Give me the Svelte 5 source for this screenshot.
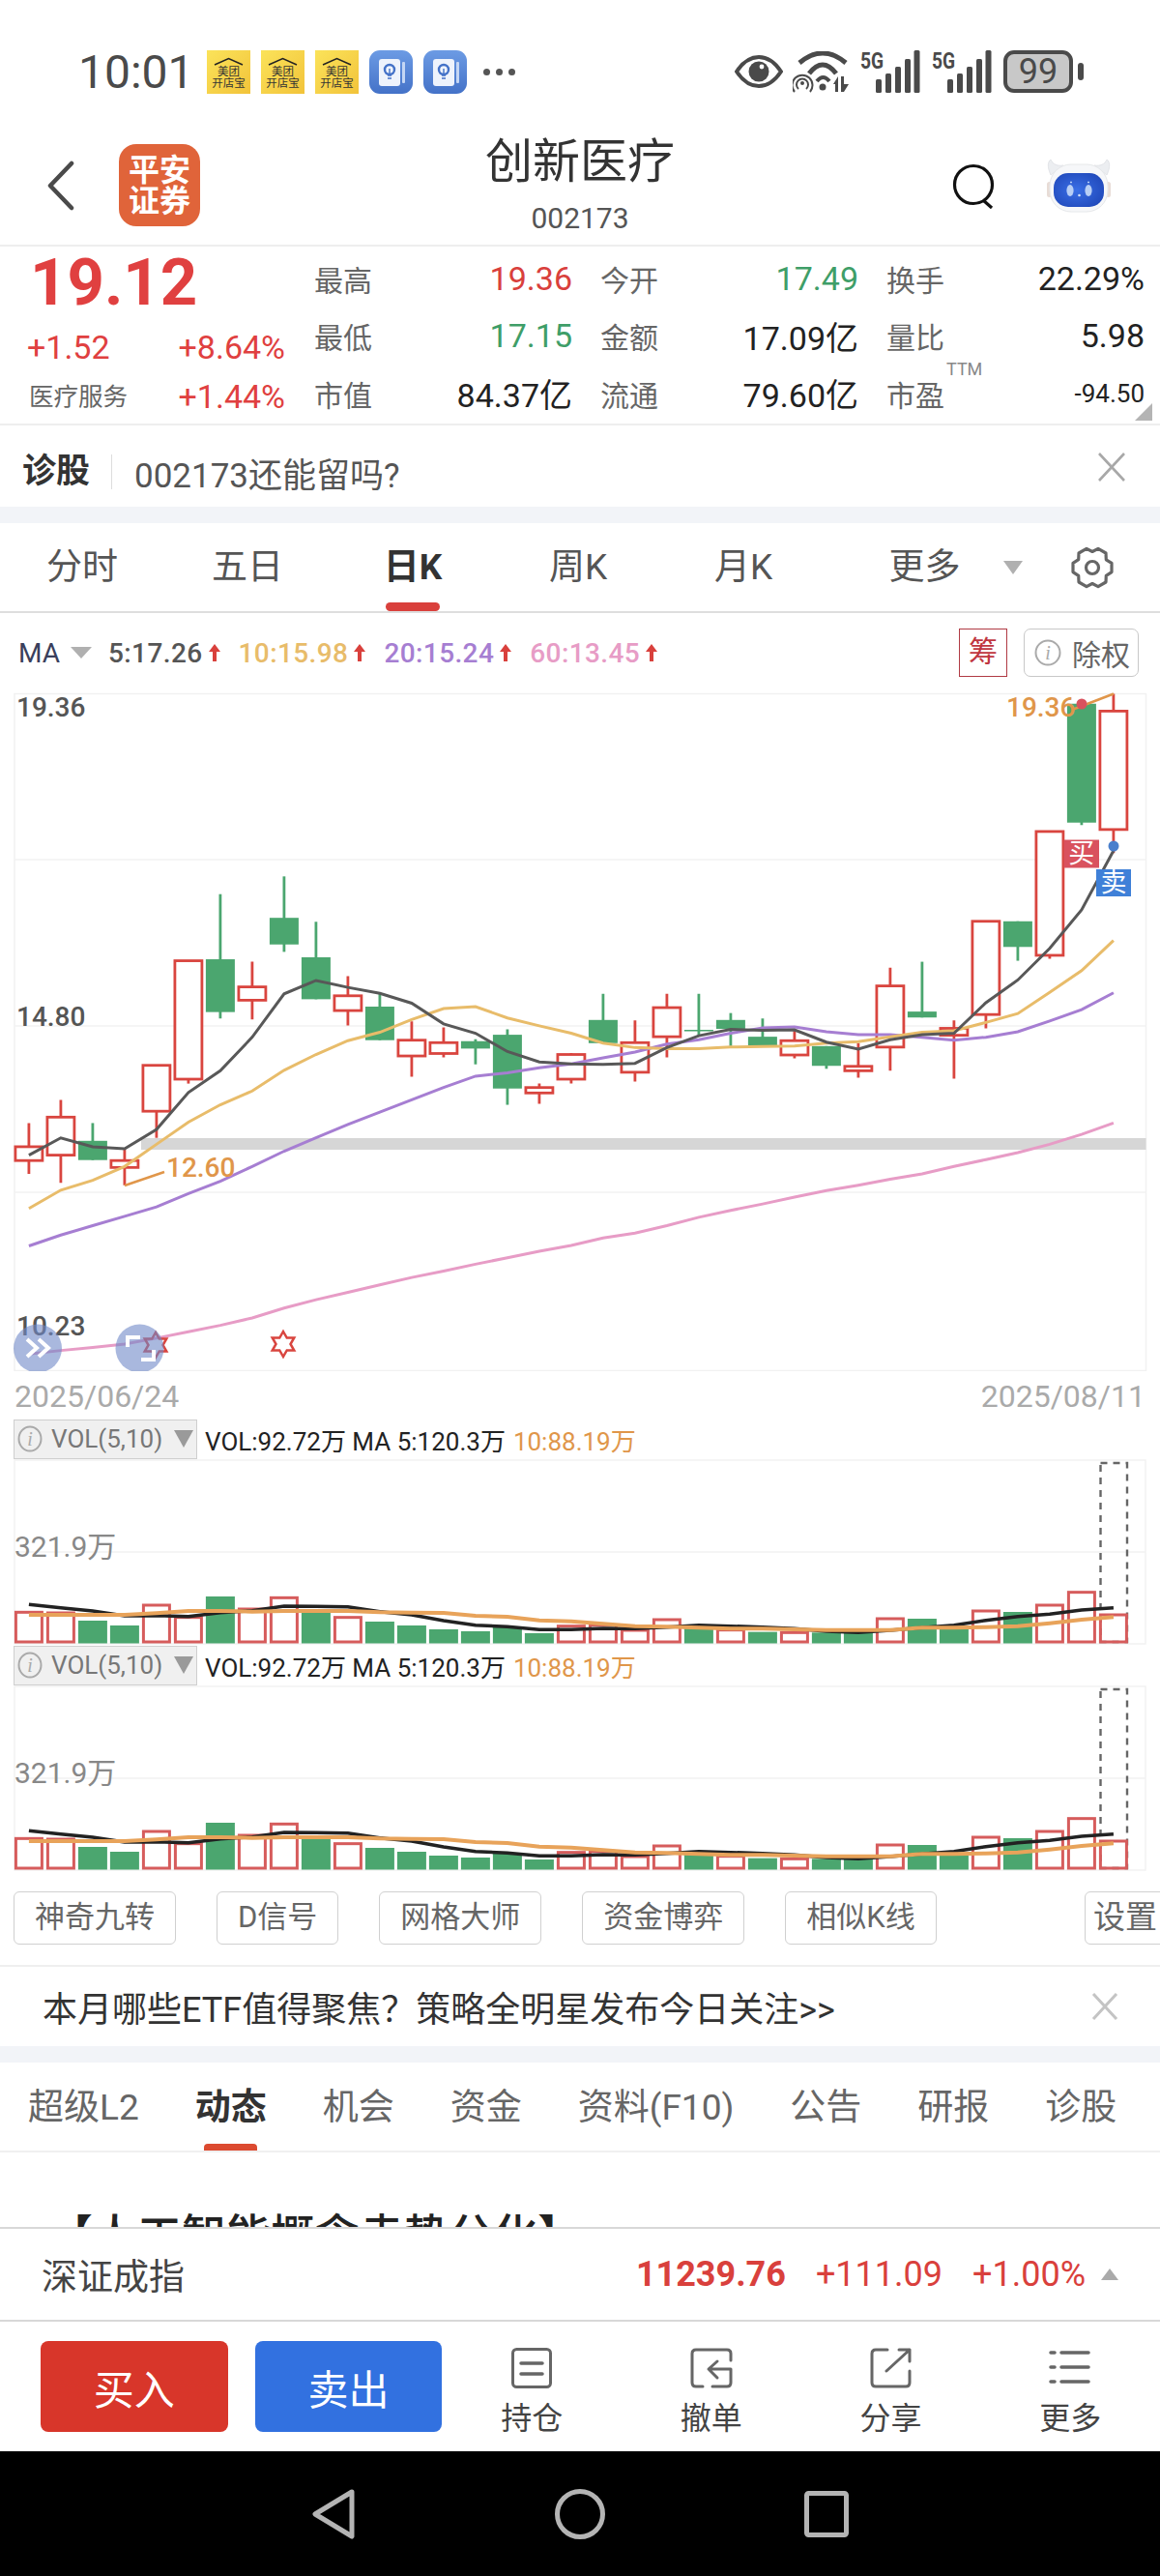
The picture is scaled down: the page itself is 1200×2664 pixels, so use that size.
<script>
  // candles traced off the chart: hi, top, bottom, lo (chart space, see py), r = up / g = down
  const candles = [
    ['r',1022,1070,1098,1125],['r',975,1010,1087,1143],['g',1022,1058,1097,1097],['r',1075,1098,1112,1148],
    ['r',905,905,998,1052],['r',693,693,933,942],['g',558,690,797,810],['r',695,746,773,812],
    ['g',522,606,660,675],['g',614,686,771,771],['r',724,764,794,824],['g',760,786,854,854],
    ['r',816,854,886,928],['r',828,859,881,889],['g',852,856,871,903],['g',832,843,952,985],
    ['r',942,950,961,983],['r',880,883,933,942],['g',760,813,860,860],['r',814,859,919,938],
    ['r',760,788,847,889],['g',760,833,836,845],['g',799,813,831,866],['g',810,847,866,866],
    ['r',835,855,884,891],['g',866,866,906,912],['r',860,907,916,930],['r',707,744,868,916],
    ['g',695,796,808,808],['r',814,830,844,932],['r',612,613,802,830],['g',613,613,665,693],
    ['r',430,431,682,689],['g',172,172,413,418],['r',152,187,427,475]
  ];
  const ma5 = [1087,1052,1070,1074,1035,960,916,848,760,733,747,759,779,821,840,877,898,902,903,901,869,845,832,834,833,858,872,853,843,840,778,732,668,590,470];
  const ma10 = [1195,1158,1138,1110,1065,1020,985,957,915,883,855,838,812,790,786,809,825,840,860,869,871,871,868,867,866,860,857,847,838,835,818,800,757,713,652];
  const ma20 = [1271,1249,1230,1211,1192,1165,1140,1110,1079,1052,1025,1000,975,950,927,920,910,902,890,878,862,853,840,829,827,837,843,843,848,854,848,837,815,792,758];
  const ma60 = [1490,1483,1477,1470,1458,1445,1432,1417,1397,1380,1365,1350,1335,1322,1308,1295,1282,1270,1255,1245,1230,1213,1199,1186,1172,1159,1148,1136,1125,1110,1096,1082,1065,1045,1022];

  const px = (i) => 29.9 + i * 33;
  const py = (z) => 640 + z / 1.96;
  const line = (arr) => arr.map((z, i) => `${px(i)},${py(z)}`).join(' ');

  const volBars = [
    ['r',682],['r',684],['g',708],['g',723],['r',660],['r',698],['g',633],['r',672],['r',637],['g',672],
    ['r',698],['g',711],['g',723],['g',735],['g',741],['g',727],['g',747],['r',725],['r',722],['r',738],
    ['r',705],['g',725],['r',737],['g',743],['r',745],['g',745],['g',740],['r',702],['g',702],['g',725],
    ['r',678],['g',681],['r',660],['r',620],['r',690]
  ];
  const volMa5 = [658,668,678,693,692,695,683,677,663,664,665,680,690,708,722,727,736,736,732,733,728,722,725,728,733,741,745,738,730,722,707,695,688,675,668];
  const volMa10 = [690,690,690,690,685,678,678,680,678,678,678,682,683,684,693,696,707,710,718,725,727,730,733,733,735,737,737,737,730,730,728,725,716,705,697];
  const vy = (z) => 1440 + z / 3;
  const vline = (arr) => arr.map((z, i) => `${px(i)},${vy(z)}`).join(' ');

  const star = '0,-13 3.75,-6.5 11.26,-6.5 7.5,0 11.26,6.5 3.75,6.5 0,13 -3.75,6.5 -11.26,6.5 -7.5,0 -11.26,-6.5 -3.75,-6.5';

  // six lobed settings gear, lobes on the sides, valleys top and bottom
  function gearPoints() {
    const pts = [];
    const at = (deg, r) => {
      const a = (deg * Math.PI) / 180;
      pts.push(`${(22 + r * Math.cos(a)).toFixed(1)},${(22 + r * Math.sin(a)).toFixed(1)}`);
    };
    for (let k = 0; k < 6; k++) {
      const a = k * 60;
      at(a - 30, 16.5);
      at(a - 13, 20.5);
      at(a + 13, 20.5);
    }
    return pts.join(' ');
  }

  const quote = [
    ['最高', '19.36', 'up'], ['今开', '17.49', 'down'], ['换手', '22.29%', ''],
    ['最低', '17.15', 'down'], ['金额', '17.09亿', ''], ['量比', '5.98', ''],
    ['市值', '84.37亿', ''], ['流通', '79.60亿', ''], ['市盈', '-94.50', 'small']
  ];
  const periods = ['分时', '五日', '日K', '周K', '月K'];
  const maItems = [
    ['5:17.26', 'c5'], ['10:15.98', 'c10'], ['20:15.24', 'c20'], ['60:13.45', 'c60']
  ];
  const tools = ['神奇九转', 'D信号', '网格大师', '资金博弈', '相似K线'];
  const infoTabs = ['超级L2', '动态', '机会', '资金', '资料(F10)', '公告', '研报', '诊股'];
</script>

<div class="page">
  <div class="status">
    <span class="time">10:01</span>
    {#each [0, 1, 2] as _}
      <svg class="note" viewBox="0 0 45 45">
        <defs>
          <linearGradient id="mt" x1="0" y1="0" x2="1" y2="1">
            <stop offset="0" stop-color="#fbe35a" /><stop offset="1" stop-color="#f2c33a" />
          </linearGradient>
        </defs>
        <rect width="45" height="45" fill="url(#mt)" />
        <path d="M8 15 L22.5 8.5 L37 15" fill="none" stroke="#222" stroke-width="1.5" />
        <text x="22.5" y="26" class="mt-txt">美团</text>
        <text x="22.5" y="38" class="mt-txt">开店宝</text>
      </svg>
    {/each}
    {#each [0, 1] as _}
      <svg class="note" viewBox="0 0 45 45">
        <defs>
          <linearGradient id="bl" x1="0" y1="0" x2="0" y2="1">
            <stop offset="0" stop-color="#6c9be4" /><stop offset="1" stop-color="#4472c8" />
          </linearGradient>
        </defs>
        <rect width="45" height="45" rx="11" fill="url(#bl)" />
        <rect x="34" y="12" width="3" height="22" rx="1" fill="#c4d6f4" />
        <rect x="10" y="9" width="22" height="28" rx="3" fill="#eef3fc" />
        <circle cx="21" cy="20" r="5" fill="none" stroke="#4472c8" stroke-width="2.4" />
        <path d="M19 26h4M19 29h4" stroke="#4472c8" stroke-width="1.6" />
        <path d="M21 19v6" stroke="#4472c8" stroke-width="1.4" />
      </svg>
    {/each}
    <span class="more-dots"><i></i><i></i><i></i></span>

    <div class="status-right">
      <svg width="50" height="34" viewBox="0 0 50 34">
        <path d="M2 17 C10 5 18 2 25 2 C32 2 40 5 48 17 C40 29 32 32 25 32 C18 32 10 29 2 17Z" fill="none" stroke="#4a4a4a" stroke-width="4" />
        <circle cx="25" cy="17" r="10.5" fill="#4a4a4a" />
        <circle cx="28" cy="12" r="2.4" fill="#fff" />
      </svg>
      <svg class="wifi" width="60" height="43" viewBox="9 7 60 43">
        <path d="M16 19 Q40 -1 64 19" fill="none" stroke="#4a4a4a" stroke-width="5" />
        <path d="M26 30 Q40 12 54 30" fill="none" stroke="#4a4a4a" stroke-width="5" />
        <path d="M34 38 Q40.5 30 47 38" fill="none" stroke="#4a4a4a" stroke-width="4" />
        <circle cx="40" cy="44" r="3.500" fill="#4a4a4a" />
        <path d="M11 49 A10.500 10.500 0 1 1 27 49 M15 46 A6 6 0 1 1 23 46" fill="none" stroke="#4a4a4a" stroke-width="2" />
        <circle cx="19" cy="40" r="2" fill="#4a4a4a" />
        <path d="M51 41 L56 33 V49 H53 V41Z M59 33 H62 V41 H67 L62 49 H59Z" fill="#4a4a4a" />
      </svg>
      {#each [0, 1] as _}
        <div class="signal">
          <span class="five-g">5G</span>
          <svg width="48" height="44" viewBox="0 0 48 44">
            <rect x="2" y="30" width="6" height="14" rx="1.5" />
            <rect x="12" y="24" width="6" height="20" rx="1.500" />
            <rect x="22" y="17" width="6" height="27" rx="1.5" />
            <rect x="32" y="9" width="6" height="35" rx="1.5" />
            <rect x="41.500" y="0" width="6" height="44" rx="1.5" />
          </svg>
        </div>
      {/each}
      <div class="battery"><span class="level">99</span><i class="cap"></i></div>
    </div>
  </div>

  <div class="nav">
    <svg class="back" width="28" height="52" viewBox="0 0 28 52">
      <path d="M25 3 L3 26 L25 49" fill="none" stroke="#4a4a4a" stroke-width="4.5" stroke-linecap="round" stroke-linejoin="round" />
    </svg>
    <div class="logo"><span>平安</span><span>证券</span></div>
    <div class="title-wrap">
      <div class="title">创新医疗</div>
      <div class="code">002173</div>
    </div>
    <svg class="search" width="44" height="48" viewBox="0 0 44 48">
      <circle cx="22" cy="23" r="19.5" fill="none" stroke="#111" stroke-width="3.2" />
      <path d="M32 39 L41 47" stroke="#111" stroke-width="3.2" />
    </svg>
    <svg class="robot" width="68" height="56" viewBox="12 7 68 56">
      <defs>
        <radialGradient id="face" cx="0.45" cy="0.5" r="0.65">
          <stop offset="0" stop-color="#3a6fe6" /><stop offset="1" stop-color="#1f47b8" />
        </radialGradient>
      </defs>
      <path d="M17 24 C13 15 14 10 17 8 C19 13 24 15 30 14Z M75 24 C79 15 78 10 75 8 C73 13 68 15 62 14Z" fill="#eceef1" stroke="#e2e4e8" />
      <rect x="13" y="31" width="5" height="16" rx="2.500" fill="#e8dcd6" />
      <rect x="74" y="31" width="5" height="16" rx="2.500" fill="#e8dcd6" />
      <rect x="16" y="13" width="60" height="49" rx="22" fill="#f6f7f9" stroke="#e6e8ea" />
      <rect x="20" y="22" width="52" height="35" rx="15" fill="url(#face)" />
      <ellipse cx="37" cy="40" rx="3.600" ry="6" fill="#b8cff5" />
      <ellipse cx="56" cy="40" rx="3.600" ry="6" fill="#b8cff5" />
      <path d="M37 31.500h2M55 31.500h2" stroke="#b8cff5" stroke-width="1.400" />
      <circle cx="46.500" cy="45" r="1.300" fill="#d6e4fa" />
    </svg>
  </div>

  <div class="quote">
    <div class="quote-left">
      <div class="price">19.12</div>
      <div class="change"><span>+1.52</span><span>+8.64%</span></div>
      <div class="sector"><span class="sector-name">医疗服务</span><span class="sector-pct">+1.44%</span></div>
    </div>
    <div class="quote-grid">
      {#each quote as [label, value, kind]}
        <div class="cell">
          <span class="cell-label">{label}{#if kind === 'small'}<sup>TTM</sup>{/if}</span>
          <span class="cell-value {kind}">{value}</span>
        </div>
      {/each}
    </div>
    <i class="corner"></i>
  </div>

  <div class="ask">
    <b>诊股</b>
    <span class="ask-text">002173还能留吗?</span>
    <svg class="close" width="30" height="30" viewBox="0 0 30 30">
      <path d="M2 1 L28 29 M28 1 L2 29" stroke="#a8a8a8" stroke-width="2.6" />
    </svg>
  </div>

  <div class="periods">
    {#each periods as p, i}
      <div class="period" class:active={i === 2}>{p}</div>
    {/each}
    <div class="period more">更多<i class="tri"></i></div>
    <svg class="gear" width="44" height="44" viewBox="0 0 44 44">
      <polygon points={gearPoints()} fill="none" stroke="#666" stroke-width="3.200" stroke-linejoin="round" />
      <circle cx="22" cy="22" r="6.500" fill="none" stroke="#666" stroke-width="3.200" />
    </svg>
  </div>

  <div class="ma-row">
    <span class="ma-name">MA</span>
    <i class="ma-tri"></i>
    {#each maItems as [text, cls]}
      <span class="ma-item {cls}">{text}
        <svg width="14" height="20" viewBox="0 0 14 20"><path d="M7 1 L13 9 H9 V19 H5 V9 H1Z" fill="#d9403c" /></svg>
      </span>
    {/each}
    <span class="chip">筹</span>
    <span class="fq">
      <svg width="28" height="28" viewBox="0 0 28 28">
        <circle cx="14" cy="14" r="12.500" fill="none" stroke="#aaa" stroke-width="2" />
        <text x="14" y="21" class="i-txt">i</text>
      </svg>
      除权
    </span>
  </div>

  <svg class="kline" width="1200" height="706" viewBox="0 712 1200 706">
    <rect x="15" y="717.500" width="1170.500" height="700" fill="none" stroke="#f1f1f1" stroke-width="1.500" />
    <path d="M15 889H1185M15 1061H1185M15 1233H1185" stroke="#f2f2f2" stroke-width="1.500" />
    <rect x="146" y="1177" width="1039.500" height="12" fill="#d6d6d6" />

    {#each candles as [kind, hi, top, bot, lo], i}
      {#if kind === 'r'}
        <path d="M{px(i)} {py(hi)}V{py(top)}M{px(i)} {py(bot)}V{py(lo)}" stroke="#d9453f" stroke-width="2.800" />
        <rect x={px(i) - 14} y={py(top)} width="28" height={py(bot) - py(top)} fill="#fff" stroke="#d9453f" stroke-width="2.800" />
      {:else}
        <path d="M{px(i)} {py(hi)}V{py(lo)}" stroke="#4ba66f" stroke-width="2.800" />
        <rect x={px(i) - 15} y={py(top)} width="30" height={py(bot) - py(top)} fill="#4ba66f" />
      {/if}
    {/each}

    <polyline points={line(ma60)} class="ma" stroke="#e79cc6" />
    <polyline points={line(ma20)} class="ma" stroke="#a67ed2" />
    <polyline points={line(ma10)} class="ma" stroke="#e8bc6a" />
    <polyline points={line(ma5)} class="ma" stroke="#585858" />

    <polyline points="129,1226 170,1212" fill="none" stroke="#e0964a" stroke-width="2.500" />
    <polyline points="1109,734 1152,717.500" fill="none" stroke="#e0964a" stroke-width="2.500" />
    <text x="172" y="1217" class="tag-num">12.60</text>
    <text x="1041" y="741" class="tag-num">19.36</text>

    <text x="17" y="741" class="axis">19.36</text>
    <text x="17" y="1061" class="axis">14.80</text>
    <text x="17" y="1381" class="axis">10.23</text>

    <circle cx="1119" cy="728" r="5.500" fill="#d9525e" />
    <circle cx="1152" cy="875" r="5.500" fill="#4a7fcc" />
    <rect x="1100.500" y="868.500" width="36.500" height="29" fill="#d9525e" />
    <text x="1118.800" y="892" class="trade">买</text>
    <rect x="1134" y="899" width="36" height="28" fill="#3f80d8" />
    <text x="1152" y="922" class="trade">卖</text>

    <polygon points={star} transform="translate(161 1391)" fill="none" stroke="#d9453f" stroke-width="2.500" />
    <polygon points={star} transform="translate(293 1390)" fill="none" stroke="#d9453f" stroke-width="2.500" />

    <ellipse cx="39" cy="1394.500" rx="25" ry="25" fill="#7088c8" opacity="0.6" />
    <path d="M28 1385 L38 1394 L28 1403 M40 1385 L50 1394 L40 1403" fill="none" stroke="#fff" stroke-width="4" />
    <ellipse cx="144.500" cy="1394.500" rx="25" ry="25" fill="#7088c8" opacity="0.6" />
    <path d="M132 1393 V1383 H145 M159 1396 V1406 H146" fill="none" stroke="#fff" stroke-width="4" />
  </svg>

  <div class="dates"><span>2025/06/24</span><span>2025/08/11</span></div>

  {#each [0, 1] as _}
    <div class="vol">
      <div class="vol-head">
        <div class="vol-pick">
          <svg width="26" height="28" viewBox="0 0 26 28">
            <ellipse cx="13" cy="14" rx="11.500" ry="12.500" fill="none" stroke="#aaa" stroke-width="2" />
            <text x="13" y="21" class="i-txt">i</text>
          </svg>
          <span>VOL(5,10)</span>
          <i class="vol-tri"></i>
        </div>
        <span class="vol-val">VOL:92.72万 MA 5:120.3万</span>
        <span class="vol-ten">10:88.19万</span>
      </div>
      <svg class="vol-chart" width="1200" height="192" viewBox="0 1509 1200 192">
        <rect x="15" y="1510" width="1170" height="190" fill="none" stroke="#f2f2f2" stroke-width="1.500" />
        <path d="M15 1605H1185" stroke="#f2f2f2" stroke-width="1.500" />
        <text x="15" y="1610" class="vol-axis">321.9万</text>
        <rect x="1138.500" y="1513" width="27.500" height="185" fill="none" stroke="#666" stroke-width="2.400" stroke-dasharray="7 6" />
        {#each volBars as [kind, top], i}
          {#if kind === 'r'}
            <rect x={px(i) - 13.500} y={vy(top)} width="27" height={1698 - vy(top)} fill={i === 34 ? 'none' : '#fff'} stroke="#d65c5c" stroke-width="3" />
          {:else}
            <rect x={px(i) - 15} y={vy(top)} width="30" height={1699.500 - vy(top)} fill="#4ba66f" />
          {/if}
        {/each}
        <polyline points={vline(volMa5)} fill="none" stroke="#222" stroke-width="3.500" />
        <polyline points={vline(volMa10)} fill="none" stroke="#e8a35a" stroke-width="4" />
      </svg>
    </div>
  {/each}

  <div class="tools">
    {#each tools as t}
      <span class="tool">{t}</span>
    {/each}
    <span class="tool set">设置</span>
  </div>

  <div class="promo">
    <span>本月哪些ETF值得聚焦？策略全明星发布今日关注&gt;&gt;</span>
    <svg width="28" height="28" viewBox="0 0 28 28">
      <path d="M2 1 L26 27 M26 1 L2 27" stroke="#c4c4c4" stroke-width="3" />
    </svg>
  </div>

  <div class="info-tabs">
    {#each infoTabs as t, i}
      <span class="info-tab" class:on={i === 1}>{t}</span>
    {/each}
  </div>

  <div class="feed"><div class="feed-title">【人工智能概念走势分化】</div></div>

  <div class="index-bar">
    <span class="index-name">深证成指</span>
    <b>11239.76</b>
    <span>+111.09</span>
    <span>+1.00%</span>
    <i class="up-tri"></i>
  </div>

  <div class="actions">
    <button class="buy">买入</button>
    <button class="sell">卖出</button>
    <div class="act">
      <svg width="42" height="42" viewBox="0 0 42 42">
        <rect x="1.500" y="1.500" width="39" height="39" rx="4" fill="none" stroke="#666" stroke-width="3" />
        <path d="M10 16H32M10 27H32" stroke="#666" stroke-width="3.500" stroke-linecap="round" />
      </svg>
      <span>持仓</span>
    </div>
    <div class="act">
      <svg width="44" height="42" viewBox="0 0 44 42">
        <path d="M42 13V6Q42 2 38 2H6Q2 2 2 6V36Q2 40 6 40H13M23 40H38Q42 40 42 36V22H20M28 14L19 22L28 31" fill="none" stroke="#666" stroke-width="3" stroke-linecap="round" stroke-linejoin="round" />
      </svg>
      <span>撤单</span>
    </div>
    <div class="act">
      <svg width="44" height="42" viewBox="0 0 44 42">
        <path d="M18 2H6Q2 2 2 6V36Q2 40 6 40H37Q41 40 41 36V24M17 24L41 2M30 2H41V14" fill="none" stroke="#666" stroke-width="3" stroke-linecap="round" stroke-linejoin="round" />
      </svg>
      <span>分享</span>
    </div>
    <div class="act">
      <svg width="44" height="42" viewBox="0 0 44 42">
        <path d="M2 5H6M13 5H41M2 20H6M13 20H41M2 35H6M13 35H41" fill="none" stroke="#666" stroke-width="3.500" stroke-linecap="round" />
      </svg>
      <span>更多</span>
    </div>
  </div>

  <div class="sysnav">
    <svg width="46" height="52" viewBox="0 0 46 52">
      <path d="M42 3 L4 26 L42 49Z" fill="none" stroke="#b4b4b4" stroke-width="5" stroke-linejoin="round" />
    </svg>
    <svg width="52" height="52" viewBox="0 0 52 52">
      <ellipse cx="26" cy="26" rx="23.500" ry="23.500" fill="none" stroke="#b4b4b4" stroke-width="5" />
    </svg>
    <svg width="46" height="48" viewBox="0 0 46 48">
      <rect x="2.500" y="2.500" width="41" height="43" rx="2" fill="none" stroke="#b4b4b4" stroke-width="5" />
    </svg>
  </div>
</div>

<style>
  :global(body) {
    margin: 0;
    background: #fff;
  }
  .page {
    width: 1200px;
    height: 2664px;
    display: flex;
    flex-direction: column;
    overflow: hidden;
    font-family: Roboto, "Noto Sans CJK SC", sans-serif;
    color: #333;
  }
  svg {
    display: block;
    flex: none;
  }
  i {
    display: block;
    font-style: normal;
  }

  /* status bar */
  .status {
    height: 130px;
    box-sizing: border-box;
    padding: 18px 0 0 81px;
    display: flex;
    align-items: center;
    flex: none;
  }
  .time {
    font-size: 48px;
    color: #4a4a4a;
    width: 133px;
  }
  .note {
    width: 45px;
    height: 45px;
    margin-right: 11px;
  }
  .mt-txt {
    font-size: 11.500px;
    text-anchor: middle;
    fill: #333;
  }
  .more-dots {
    display: flex;
    gap: 6px;
    margin-left: 6px;
  }
  .more-dots i {
    width: 7px;
    height: 7px;
    border-radius: 50%;
    background: #555;
  }
  .status-right {
    margin-left: auto;
    margin-right: 80px;
    display: flex;
    align-items: center;
    gap: 10px;
  }
  .signal {
    position: relative;
    width: 62px;
    height: 44px;
    display: flex;
    justify-content: flex-end;
    margin-right: 2px;
  }
  .signal svg {
    fill: #4a4a4a;
  }
  .five-g {
    position: absolute;
    left: 0;
    top: -3px;
    font-size: 24px;
    font-weight: 700;
    color: #4a4a4a;
    transform: scaleX(0.8);
    transform-origin: left;
  }
  .battery {
    position: relative;
    width: 72px;
    height: 44px;
    box-sizing: border-box;
    border: 4px solid #4a4a4a;
    border-radius: 11px;
    background: #c8c8c8;
    text-align: center;
    margin-right: 10px;
  }
  .level {
    font-size: 36px;
    line-height: 36px;
    color: #4a4a4a;
  }
  .cap {
    position: absolute;
    right: -15px;
    top: 9px;
    width: 6px;
    height: 18px;
    border-radius: 3px;
    background: #4a4a4a;
  }

  /* nav */
  .nav {
    height: 123px;
    flex: none;
    display: flex;
    align-items: center;
    padding-left: 49px;
    box-sizing: border-box;
  }
  .logo {
    margin-left: 46px;
    width: 84px;
    height: 85px;
    border-radius: 18px;
    background: #e0643a;
    color: #fff;
    font-size: 32px;
    font-weight: 700;
    line-height: 32px;
    display: flex;
    flex-direction: column;
    align-items: center;
    justify-content: center;
  }
  .title-wrap {
    flex: 1;
    text-align: center;
    padding-left: 8px;
    margin-top: -4px;
  }
  .title {
    font-size: 49px;
    line-height: 64px;
    color: #333;
  }
  .code {
    font-size: 30px;
    line-height: 36px;
    margin-top: 8px;
    color: #555;
  }
  .search {
    margin-right: 53px;
  }
  .robot {
    margin-right: 50px;
  }

  /* quote panel */
  .quote {
    height: 187px;
    flex: none;
    box-sizing: border-box;
    border-top: 2px solid #eeeeee;
    border-bottom: 2px solid #eeeeee;
    display: flex;
    position: relative;
  }
  .quote-left {
    width: 325px;
    box-sizing: border-box;
    padding: 0 30px 0 28px;
    flex: none;
    color: #e04040;
  }
  .price {
    font-size: 67px;
    line-height: 74px;
    font-weight: 700;
    margin-top: 0;
    padding-left: 3px;
  }
  .change,
  .sector {
    display: flex;
    justify-content: space-between;
    align-items: center;
    font-size: 34px;
    line-height: 52px;
  }
  .change {
    margin-top: 4px;
  }
  .sector {
    line-height: 50px;
  }
  .sector-name {
    font-size: 25.500px;
    color: #666;
    padding-left: 2px;
  }
  .quote-grid {
    display: grid;
    grid-template-columns: repeat(3, 267px);
    column-gap: 29px;
    grid-auto-rows: 59.500px;
    padding-top: 3px;
  }
  .cell {
    display: flex;
    justify-content: space-between;
    align-items: center;
  }
  .cell-label {
    font-size: 30px;
    color: #666;
    position: relative;
  }
  .cell-label sup {
    position: absolute;
    left: 62px;
    top: -12px;
    font-size: 18px;
    color: #888;
    line-height: 1;
  }
  .cell-value {
    font-size: 34px;
    color: #222;
  }
  .cell-value.up {
    color: #d9403c;
  }
  .cell-value.down {
    color: #3f9e68;
  }
  .cell-value.small {
    font-size: 26px;
  }
  .corner {
    position: absolute;
    right: 8px;
    bottom: 3px;
    width: 0;
    height: 0;
    border-left: 18px solid transparent;
    border-bottom: 18px solid #b4b4b4;
  }

  .ask {
    flex: none;
    display: flex;
    align-items: center;
    padding: 12px 20px 0 23px;
    box-sizing: border-box;
    border-bottom: 17px solid #f2f4f8;
    height: 101px;
  }
  .ask b {
    font-size: 35px;
    color: #333;
    padding-right: 22px;
    border-right: 1px solid #ddd;
    line-height: 36px;
  }
  .ask-text {
    font-size: 35px;
    margin-left: 23px;
    color: #555;
    flex: 1;
  }
  .close {
    margin: 0 15px 10px 0;
  }

  /* period tabs */
  .periods {
    height: 93px;
    flex: none;
    box-sizing: border-box;
    border-bottom: 2px solid #dedede;
    display: flex;
    align-items: center;
  }
  .period {
    width: 172px;
    height: 93px;
    box-sizing: border-box;
    margin-left: -1px;
    text-align: center;
    line-height: 94px;
    font-size: 37px;
    color: #555;
    position: relative;
  }
  .period.active {
    font-weight: 700;
    color: #333;
  }
  .period.active::after {
    content: "";
    position: absolute;
    left: 58px;
    width: 56px;
    bottom: 1px;
    height: 9px;
    border-radius: 5px;
    background: #d9403c;
  }
  .period.more {
    width: 205px;
    padding-right: 78px;
    margin-left: 38px;
  }
  .tri {
    position: absolute;
    right: 40px;
    top: 40px;
    width: 0;
    height: 0;
    border-left: 10px solid transparent;
    border-right: 10px solid transparent;
    border-top: 14px solid #b0b0b0;
  }
  .gear {
    margin-left: 10px;
  }

  /* MA legend */
  .ma-row {
    height: 78px;
    flex: none;
    box-sizing: border-box;
    padding: 4px 22px 0 19px;
    display: flex;
    align-items: center;
    font-size: 28px;
  }
  .ma-name {
    color: #3a3f5c;
    width: 54px;
  }
  .ma-tri {
    width: 0;
    height: 0;
    border-left: 11px solid transparent;
    border-right: 11px solid transparent;
    border-top: 12px solid #b0b0b0;
    margin-right: 17px;
  }
  .ma-item {
    display: flex;
    align-items: center;
    gap: 5px;
    margin-right: 18px;
    letter-spacing: 0.4px;
    font-weight: 500;
  }
  .c5 { color: #555; }
  .c10 { color: #e8bc6a; }
  .c20 { color: #a67ed2; }
  .c60 { color: #e79cc6; }
  .chip {
    margin-left: auto;
    width: 50px;
    height: 50px;
    box-sizing: border-box;
    border: 1.500px solid #b03a44;
    color: #c0363f;
    text-align: center;
    line-height: 46px;
    font-size: 30px;
  }
  .fq {
    margin-left: 17px;
    width: 119px;
    height: 50px;
    box-sizing: border-box;
    border: 1.500px solid #c8c8c8;
    border-radius: 7px;
    color: #666;
    font-size: 30px;
    display: flex;
    align-items: center;
    justify-content: space-between;
    padding: 0 8px 0 10px;
  }
  .i-txt {
    font-family: "Liberation Serif", serif;
    font-style: italic;
    font-size: 20px;
    fill: #aaa;
    text-anchor: middle;
  }

  /* k-line */
  .kline {
    flex: none;
  }
  .ma {
    fill: none;
    stroke-width: 3;
  }
  .axis {
    font-size: 28px;
    font-weight: 500;
    fill: #555;
  }
  .tag-num {
    font-size: 28px;
    font-weight: 500;
    fill: #e0964a;
  }
  .trade {
    font-size: 27px;
    fill: #fff;
    text-anchor: middle;
  }
  .dates {
    height: 49px;
    flex: none;
    display: flex;
    justify-content: space-between;
    padding: 0 15px;
    font-size: 32px;
    line-height: 52px;
    color: #aaa;
  }

  /* volume panels */
  .vol {
    height: 234px;
    flex: none;
  }
  .vol-head {
    height: 42px;
    display: flex;
    align-items: center;
    padding-left: 14px;
    font-size: 26px;
  }
  .vol-pick {
    width: 190px;
    height: 41px;
    box-sizing: border-box;
    background: #f0f0f0;
    border: 1.500px solid #cfcfcf;
    display: flex;
    align-items: center;
    padding-left: 3px;
    color: #777;
    position: relative;
  }
  .vol-pick span {
    margin-left: 9px;
  }
  .vol-tri {
    position: absolute;
    right: 3px;
    top: 10px;
    width: 0;
    height: 0;
    border-left: 10px solid transparent;
    border-right: 10px solid transparent;
    border-top: 18px solid #9a9a9a;
  }
  .vol-val {
    margin-left: 8px;
    color: #222;
  }
  .vol-ten {
    margin-left: 8px;
    color: #e0964a;
  }
  .vol-chart {
    height: 192px;
  }
  .vol-axis {
    font-size: 30px;
    fill: #888;
  }

  /* tool buttons */
  .tools {
    flex: none;
    height: 76px;
    box-sizing: border-box;
    padding: 21px 0 0 14px;
    display: flex;
    gap: 42px;
  }
  .tool {
    height: 55px;
    box-sizing: border-box;
    border: 1.500px solid #d0d0d0;
    border-radius: 6px;
    padding: 0 21px;
    font-size: 31px;
    line-height: 52px;
    color: #666;
    white-space: nowrap;
  }
  .tool.set {
    margin-left: auto;
    margin-right: -6px;
    font-size: 33px;
    padding: 0 8px 0 8px;
  }

  .promo {
    flex: none;
    height: 84px;
    margin-top: 21px;
    box-sizing: border-box;
    border-top: 2px solid #efefef;
    padding: 0 43px 0 44px;
    display: flex;
    align-items: center;
    justify-content: space-between;
    font-size: 36px;
    color: #333;
  }

  .info-tabs {
    flex: none;
    height: 110px;
    box-sizing: border-box;
    border-top: 17px solid #f2f4f8;
    border-bottom: 2px solid #f0f0f0;
    padding-left: 29px;
    display: flex;
    gap: 58px;
    font-size: 37px;
    color: #666;
  }
  .info-tab {
    line-height: 94px;
    height: 91px;
    position: relative;
    white-space: nowrap;
  }
  .info-tab.on {
    font-weight: 700;
    color: #333;
  }
  .info-tab.on::after {
    content: "";
    position: absolute;
    left: 9px;
    right: 10px;
    bottom: 0;
    height: 7px;
    border-radius: 4px 4px 0 0;
    background: #dc4a30;
  }
  .feed {
    flex: none;
    height: 77px;
    overflow: hidden;
    padding-left: 50px;
  }
  .feed-title {
    font-size: 46px;
    line-height: 60px;
    margin-top: 56px;
    color: #222;
    font-weight: 500;
    white-space: nowrap;
  }

  .index-bar {
    flex: none;
    height: 98px;
    box-sizing: border-box;
    border-top: 2px solid #d8d8d8;
    border-bottom: 2px solid #d8d8d8;
    padding: 0 43px 0 43px;
    display: flex;
    align-items: center;
    gap: 31px;
    color: #d9403c;
    font-size: 36px;
  }
  .index-bar b {
    font-weight: 700;
  }
  .index-name {
    font-size: 37px;
    color: #444;
    margin-right: auto;
  }
  .up-tri {
    width: 0;
    height: 0;
    border-left: 9px solid transparent;
    border-right: 9px solid transparent;
    border-bottom: 12px solid #aaa;
    margin-left: -15px;
  }

  .actions {
    flex: none;
    height: 134px;
    display: flex;
    padding: 20px 0 0 42px;
    box-sizing: border-box;
  }
  .actions button {
    width: 194px;
    height: 94px;
    border: none;
    border-radius: 8px;
    color: #fff;
    font-family: inherit;
    font-size: 42px;
    margin-right: 28px;
  }
  .buy {
    background: #d8362a;
  }
  .actions .sell {
    background: #3271e0;
    margin-right: 0;
  }
  .act {
    width: 186px;
    display: flex;
    flex-direction: column;
    align-items: center;
    margin-top: 7px;
    font-size: 32px;
    color: #444;
  }
  .act span {
    margin-top: 9px;
    line-height: 44px;
  }

  .sysnav {
    flex: 1;
    background: #000;
    display: flex;
    align-items: center;
    justify-content: center;
    gap: 206px;
  }
</style>
